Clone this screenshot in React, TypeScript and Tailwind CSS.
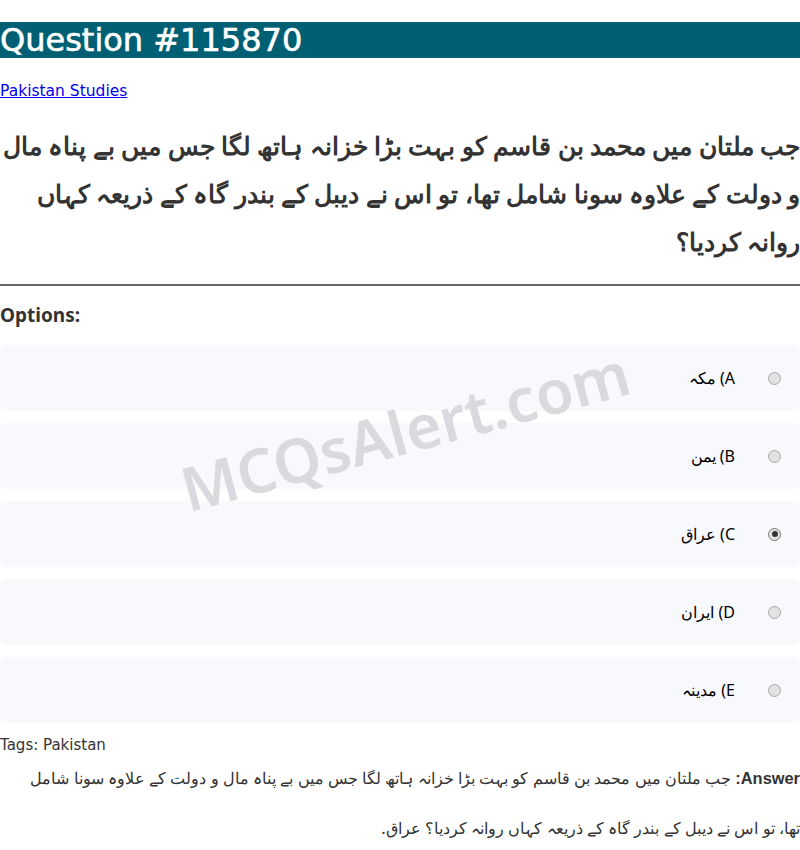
const question =
  'جب ملتان میں محمد بن قاسم کو بہت بڑا خزانہ ہاتھ لگا جس میں بے پناہ مال و دولت کے علاوہ سونا شامل تھا، تو اس نے دیبل کے بندر گاہ کے ذریعہ کہاں روانہ کردیا؟';

const options = [
  { key: 'A', text: 'مکہ' },
  { key: 'B', text: 'یمن' },
  { key: 'C', text: 'عراق', correct: true },
  { key: 'D', text: 'ایران' },
  { key: 'E', text: 'مدینہ' },
];

const Radio = ({ checked }: { checked?: boolean }) => (
  <span
    className={`flex h-[13px] w-[13px] shrink-0 items-center justify-center rounded-full border bg-[#e2e2e2] ${
      checked ? 'border-[#777]' : 'border-[#a8a8a8]'
    }`}
  >
    {checked && <span className="h-[6px] w-[6px] rounded-full bg-[#333]" />}
  </span>
);

const App = () => {
  return (
    <div className="relative min-h-[850px] overflow-hidden bg-white font-sans text-[#333]">
      <h1 className="mt-[22px] bg-[#005f73] font-['DejaVu_Sans',sans-serif] text-[32px] font-normal leading-[36px] text-white [-webkit-text-stroke:0.6px_white]">
        Question #115870
      </h1>

      <p className="mt-6 font-['DejaVu_Sans',sans-serif] text-[15.5px] leading-[18px]">
        <a href="#" className="text-[#0000ee] underline">
          Pakistan Studies
        </a>
      </p>

      <p dir="rtl" className="mt-[22px] text-[24.5px] font-bold leading-[48px]">
        {question}
      </p>

      <hr className="mt-[18px] border-0 border-t-2 border-[#666]" />

      <h3 className="mt-[17px] text-[19px] font-bold leading-[24px] text-[#333]">Options:</h3>

      <div className="mt-[18px] flex flex-col gap-3">
        {options.map((o) => (
          <label
            key={o.key}
            dir="rtl"
            className="flex h-[66px] items-center gap-[33px] rounded-md bg-[#f8f9fc] pr-[19px]"
          >
            <Radio checked={o.correct} />
            <span className="text-[16px] leading-[20px] text-black">
              {o.key}) {o.text}
            </span>
          </label>
        ))}
      </div>

      <p className="mt-[14px] font-['DejaVu_Sans',sans-serif] text-[15px] leading-[16px] text-[#333]">
        Tags: Pakistan
      </p>

      <p dir="rtl" className="pl-[10px] text-[16.4px] leading-[49px] text-[#333]">
        <strong className="font-['Liberation_Sans',sans-serif]">Answer:</strong> {question} عراق.
      </p>

      {/* watermark */}
      <div className="pointer-events-none absolute left-[405px] top-[430px] -translate-x-1/2 -translate-y-1/2 -rotate-15 whitespace-nowrap text-[61px] font-semibold leading-none text-[#d9dadd]">
        MCQsAlert.com
      </div>
    </div>
  );
};

export default App;
